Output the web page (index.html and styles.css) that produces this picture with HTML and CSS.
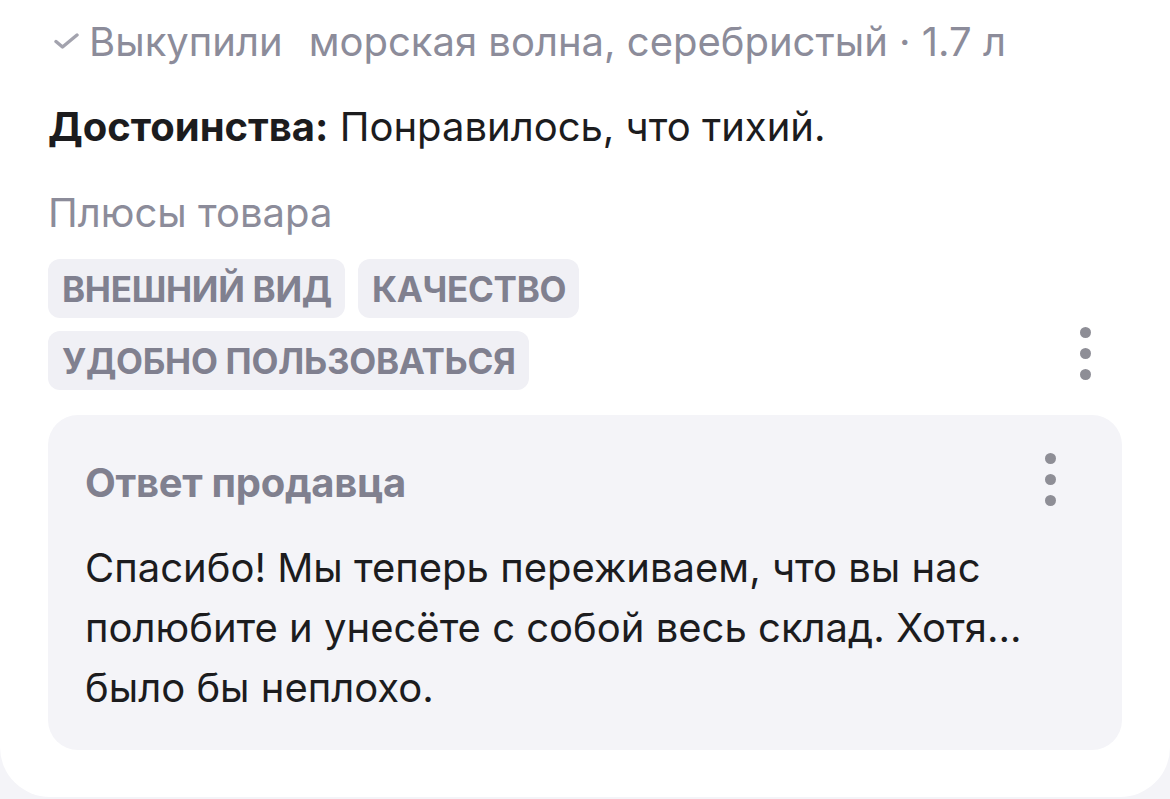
FILE: index.html
```html
<!DOCTYPE html>
<html lang="ru">
<head>
<meta charset="utf-8">
<link rel="stylesheet" href="styles.css">
</head>
<body>
<div class="card">
  <div class="meta">
    <svg class="check" width="26" height="18" viewBox="0 0 26 18"><path d="M3 9.5 L9.5 15 L24 3" fill="none" stroke="#a3a3ae" stroke-width="3.4" stroke-linecap="round" stroke-linejoin="round"/></svg>
    <span class="bought">Выкупили</span>
    <span class="variant">морская волна, серебристый · 1.7 л</span>
  </div>
  <p class="pros"><b>Достоинства:</b> Понравилось, что тихий.</p>
  <div class="label">Плюсы товара</div>
  <div class="tags-row">
    <div class="tags">
      <span class="tag">Внешний вид</span>
      <span class="tag">Качество</span>
      <span class="tag">Удобно пользоваться</span>
    </div>
    <button class="more more-outer" aria-label="Ещё"><i></i><i></i><i></i></button>
  </div>
  <div class="answer">
    <div class="answer-head">
      <div class="answer-title">Ответ продавца</div>
      <button class="more more-inner" aria-label="Ещё"><i></i><i></i><i></i></button>
    </div>
    <p class="answer-text">Спасибо! Мы теперь переживаем, что вы нас полюбите и унесёте с собой весь склад. Хотя… было бы неплохо.</p>
  </div>
</div>
</body>
</html>
```
FILE: styles.css
```css
html, body {
  margin: 0;
  padding: 0;
  background: #f4f4f8;
}
body {
  font-family: Inter, "Noto Sans", sans-serif;
  color: #1c1c1e;
}
.card {
  background: #fff;
  height: 797px;
  box-sizing: border-box;
  border-radius: 0 0 50px 50px;
  padding: 18px 48px 0 48px;
}
.meta {
  display: flex;
  align-items: center;
  font-size: 40px;
  line-height: 48px;
  color: #8c8c9a;
  height: 48px;
}
.check {
  margin-left: 5px;
  margin-right: 10px;
  margin-top: -2px;
}
.bought {
  margin-right: 26px;
}
.pros {
  margin: 37px 0 0 0;
  font-size: 40px;
  line-height: 48px;
  color: #1c1c1e;
}
.pros b {
  font-weight: 700;
}
.label {
  margin-top: 38px;
  font-size: 40px;
  line-height: 48px;
  color: #8c8c9a;
}
.tags-row {
  display: flex;
  justify-content: space-between;
  align-items: flex-end;
  margin-top: 22px;
}
.tags {
  display: flex;
  flex-wrap: wrap;
  gap: 13px;
  width: 600px;
}
.tag {
  background: #f0f0f5;
  border-radius: 12px;
  height: 59px;
  display: flex;
  align-items: center;
  padding: 0 13px 0 14px;
  font-size: 35px;
  font-weight: 700;
  text-transform: uppercase;
  color: #80808f;
  letter-spacing: -0.3px;
}
.more {
  border: 0;
  background: none;
  padding: 0;
  width: 24px;
  display: flex;
  flex-direction: column;
  align-items: center;
  gap: 10px;
}
.more i {
  display: block;
  width: 11px;
  height: 11px;
  border-radius: 50%;
  background: #8e8e96;
}
.more-outer {
  margin-right: 25px;
  margin-bottom: 10px;
}
.more-inner {
  margin-bottom: 8px;
}
.answer {
  margin-top: 25px;
  background: #f4f4f8;
  border-radius: 30px;
  height: 335px;
  box-sizing: border-box;
  padding: 35px 60px 0 37px;
}
.answer-head {
  display: flex;
  justify-content: space-between;
  align-items: center;
}
.answer-title {
  font-size: 40px;
  font-weight: 700;
  color: #80808f;
  line-height: 66px;
  letter-spacing: -0.3px;
}
.answer-text {
  margin: 22px 0 0 0;
  font-size: 40px;
  line-height: 60px;
  color: #1c1c1e;
  max-width: 980px;
}
```
